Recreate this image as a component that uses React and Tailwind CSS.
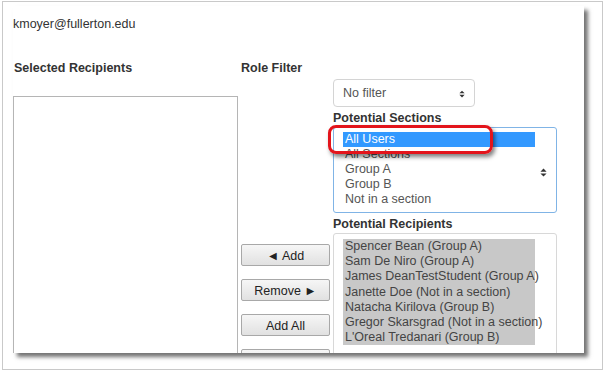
import React from "react";

const Caret = ({ className }) => (
  <svg className={className} viewBox="0 0 8 10" width="8" height="10">
    <path d="M4 0.5 L7.5 4 L0.5 4 Z" fill="#333" />
    <path d="M4 9.5 L7.5 6 L0.5 6 Z" fill="#333" />
  </svg>
);

const sections = ["All Users", "All Sections", "Group A", "Group B", "Not in a section"];

const recipients = [
  "Spencer Bean (Group A)",
  "Sam De Niro (Group A)",
  "James DeanTestStudent (Group A)",
  "Janette Doe (Not in a section)",
  "Natacha Kirilova (Group B)",
  "Gregor Skarsgrad (Not in a section)",
  "L'Oreal Tredanari (Group B)",
];

const buttons = ["◄ Add", "Remove ►", "Add All", ""];

const App = () => {
  return (
    <div
      className="relative w-[604px] h-[373px] bg-white pl-[2px] pt-[1px] overflow-hidden text-[12.5px] text-[#333]"
      style={{ fontFamily: '"Liberation Sans", Arial, sans-serif' }}
    >
      <div className="w-[601px] h-[369px] border border-[#c9c9c9] pl-[10px] pt-[4px]">
        <div className="w-[571px] h-[347px] bg-white overflow-hidden shadow-[4px_4px_4px_rgba(0,0,0,0.55)]">
          <p className="mt-[11px] leading-[15px]">kmoyer@fullerton.edu</p>

          <div className="flex mt-[28px]">
            {/* selected recipients */}
            <div className="w-[228px] shrink-0">
              <h3 className="font-bold leading-[15px] pt-[1px] pl-[1px]">Selected Recipients</h3>
              <div className="mt-[20px] w-[225px] h-[300px] border border-[#b5b5b5]"></div>
            </div>

            {/* role filter + buttons */}
            <div className="w-[92px] shrink-0">
              <h3 className="font-bold leading-[15px] pt-[1px]">Role Filter</h3>
              <div className="mt-[168px] flex flex-col gap-[13px]">
                {buttons.map((b, i) => (
                  <button
                    key={i}
                    className="w-[89px] h-[22px] shrink-0 border border-[#a8a8a8] rounded-[2px] bg-gradient-to-b from-[#f6f6f6] to-[#e1e1e1] text-[#222] leading-[20px] pt-[1px] text-center"
                  >
                    {b}
                  </button>
                ))}
              </div>
            </div>

            {/* potential sections / recipients */}
            <div className="w-[224px] shrink-0">
              <div className="mt-[19px] w-[142px] h-[28px] border border-[#d4d4d4] rounded-[4px] flex items-center pl-[9px] pr-[9px] pt-[1px] text-[#555]">
                <span className="flex-1 leading-[15px]">No filter</span>
                <Caret className="w-[6px] h-[8px]" />
              </div>

              <h3 className="mt-[3px] pt-[1px] font-bold leading-[15px]">Potential Sections</h3>
              <div className="mt-[1px] w-[224px] h-[86px] border border-[#80b4e6] rounded-[3px] flex items-start pl-[9px] pt-[4px]">
                <ul className="w-[192px] shrink-0">
                  {sections.map((s, i) => (
                    <li
                      key={s}
                      className={
                        i === 0
                          ? "leading-[15px] pl-[2px] bg-[#3399ff] text-white"
                          : "leading-[15px] pl-[2px] text-[#555]"
                      }
                    >
                      {s}
                    </li>
                  ))}
                </ul>
                <div className="self-center ml-[5px] flex">
                  <Caret className="w-[7px] h-[9px]" />
                </div>
              </div>

              <h3 className="mt-[3px] pt-[1px] font-bold leading-[15px]">Potential Recipients</h3>
              <div className="mt-[1px] w-[224px] h-[160px] border border-[#d8d8d8] rounded-[3px] pl-[9px] pt-[5px]">
                <ul className="w-[192px] bg-[#c8c8c8]">
                  {recipients.map((r) => (
                    <li key={r} className="leading-[15.2px] pl-[2px] text-[#444] whitespace-nowrap">
                      {r}
                    </li>
                  ))}
                </ul>
              </div>
            </div>
          </div>
        </div>
      </div>

      {/* annotation */}
      <div className="absolute left-[328px] top-[125px] w-[165px] h-[29px] border-[3px] border-[#e3141b] rounded-[8px] shadow-[2px_3px_4px_rgba(0,0,0,0.5)]"></div>
    </div>
  );
};

export default App;
